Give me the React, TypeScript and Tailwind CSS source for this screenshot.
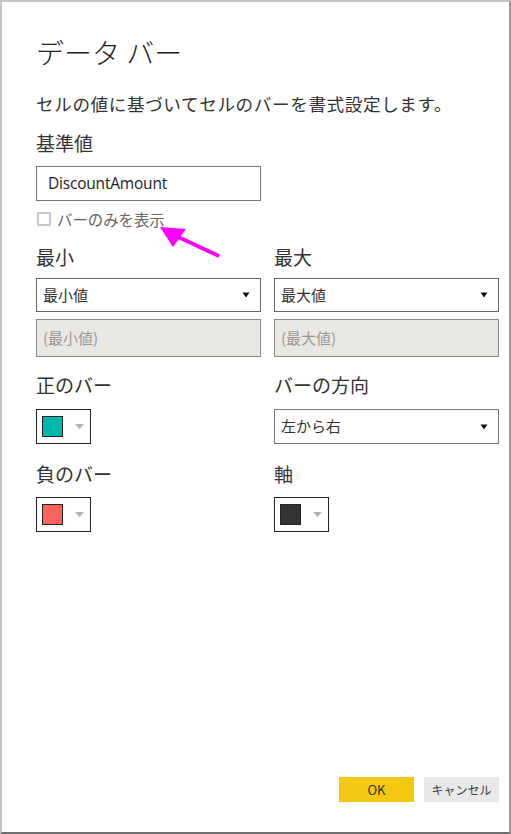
const JP = "font-['Noto_Sans_CJK_JP','Noto_Sans',sans-serif]";

function Caret() {
  return (
    <svg width="8" height="6" viewBox="0 0 8 6" className="shrink-0">
      <path d="M0.5 0.5 L7.5 0.5 L4 5.5 Z" fill="#111" />
    </svg>
  );
}

function Dropdown({ value }: { value: string }) {
  return (
    <div className="flex h-[34px] items-center justify-between border border-[#666] bg-white pl-[6px] pr-[10px]">
      <span className="text-[15px] text-[#333]">{value}</span>
      <Caret />
    </div>
  );
}

function Disabled({ value }: { value: string }) {
  return (
    <div className="flex h-[38px] items-center border border-[#8a8a8a] bg-[#e9e8e2] px-[6px]">
      <span className="text-[15px] text-[#9a9a9a]">{value}</span>
    </div>
  );
}

function ColorPick({ color }: { color: string }) {
  return (
    <div className="flex h-[35px] w-[55px] items-center gap-[12px] border border-[#222] bg-white pl-[5px]">
      <div className="h-[21px] w-[21px] border border-[#222]" style={{ backgroundColor: color }} />
      <svg width="9" height="5" viewBox="0 0 9 5">
        <path d="M0 0 L9 0 L4.5 5 Z" fill="#b3b3b3" />
      </svg>
    </div>
  );
}

function Label({ children }: { children: React.ReactNode }) {
  return <div className="text-[19px] leading-[28px] text-[#333]">{children}</div>;
}

export default function App() {
  return (
    <div className={`relative h-[834px] w-[511px] bg-white ${JP}`}>
      <div className="flex h-full w-full flex-col border-l-2 border-t-2 border-r-2 border-b-2 border-l-[#c4c4c4] border-t-[#c4c4c4] border-r-[#9a9a9a] border-b-[#6e6e6e] pl-[34px]">
        <h1 className="mt-[28px] text-[28px] font-light leading-[44px] text-[#222]">
          データ バー
        </h1>
        <p className="mt-[17px] text-[17.6px] leading-[26px] tracking-[0.6px] text-[#333]">
          セルの値に基づいてセルのバーを書式設定します。
        </p>

        <div className="mt-[12px]">
          <Label>基準値</Label>
        </div>
        <div className="mt-[9px] flex h-[35px] w-[225px] items-center border border-[#777] px-[11px]">
          <span className="font-['Open_Sans',sans-serif] text-[15.5px] tracking-[-0.2px] text-[#222]">
            DiscountAmount
          </span>
        </div>
        <label className="mt-[8px] flex items-center gap-[6px]">
          <span className="ml-[1px] h-[14px] w-[14px] border-2 border-[#c9c9c9] bg-white" />
          <span className="text-[15.4px] leading-[20px] text-[#666]">バーのみを表示</span>
        </label>

        <div className="mt-[14px] grid grid-cols-[225px_225px] gap-x-[13px]">
          <div className="flex flex-col">
            <Label>最小</Label>
            <div className="mt-[7px]">
              <Dropdown value="最小値" />
            </div>
            <div className="mt-[7px]">
              <Disabled value="(最小値)" />
            </div>
          </div>
          <div className="flex flex-col">
            <Label>最大</Label>
            <div className="mt-[7px]">
              <Dropdown value="最大値" />
            </div>
            <div className="mt-[7px]">
              <Disabled value="(最大値)" />
            </div>
          </div>

          <div className="mt-[14px] flex flex-col">
            <Label>正のバー</Label>
            <div className="mt-[10px]">
              <ColorPick color="#01b8aa" />
            </div>
          </div>
          <div className="mt-[14px] flex flex-col">
            <Label>バーの方向</Label>
            <div className="mt-[10px] [&>div]:h-[35px] [&>div]:border-[#777]">
              <Dropdown value="左から右" />
            </div>
          </div>

          <div className="mt-[16px] flex flex-col">
            <Label>負のバー</Label>
            <div className="mt-[9px]">
              <ColorPick color="#fd625e" />
            </div>
          </div>
          <div className="mt-[16px] flex flex-col">
            <Label>軸</Label>
            <div className="mt-[9px]">
              <ColorPick color="#333333" />
            </div>
          </div>
        </div>

        <div className="mt-auto mb-[30px] flex justify-end gap-[10px] pr-[10px]">
          <button className="flex h-[25px] w-[75px] items-center justify-center bg-[#f2c811] text-[13px] text-[#333]">
            OK
          </button>
          <button className="flex h-[25px] w-[75px] items-center justify-center bg-[#e9e9e9] text-[12px] text-[#444]">
            キャンセル
          </button>
        </div>
      </div>

      <svg
        className="pointer-events-none absolute left-0 top-0"
        width="511"
        height="834"
        viewBox="0 0 511 834"
      >
        <line x1="176" y1="236" x2="219" y2="256" stroke="#ff00ff" strokeWidth="4" />
        <polygon points="160,227 186,229 173,247" fill="#ff00ff" />
      </svg>
    </div>
  );
}
